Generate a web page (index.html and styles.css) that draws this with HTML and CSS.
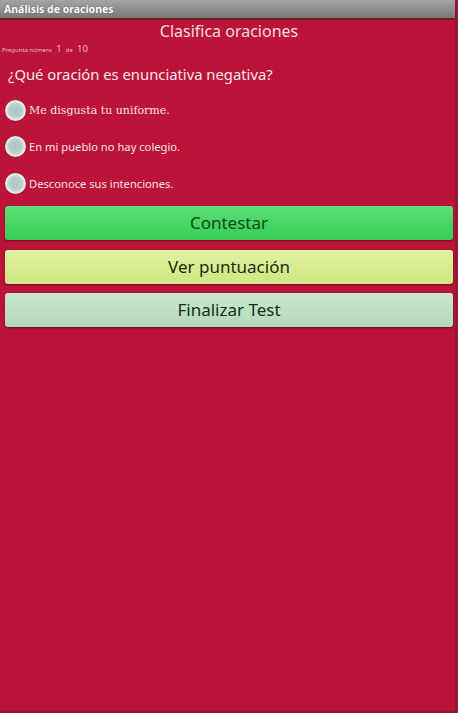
FILE: index.html
```html
<!DOCTYPE html>
<html lang="es">
<head>
<meta charset="utf-8">
<title>Análisis de oraciones</title>
<link rel="stylesheet" href="styles.css">
</head>
<body>
<div class="screen">
  <div class="titlebar">Análisis de oraciones</div>
  <div class="content">
    <h1 class="heading">Clasifica oraciones</h1>
    <div class="counter"><span class="lbl">Pregunta número</span> <span class="num">1</span> <span class="lbl">de</span> <span class="num">10</span></div>
    <div class="question">¿Qué oración es enunciativa negativa?</div>
    <div class="options">
      <label class="option"><span class="radio"></span><span class="opt-text serif">Me disgusta tu uniforme.</span></label>
      <label class="option"><span class="radio"></span><span class="opt-text">En mi pueblo no hay colegio.</span></label>
      <label class="option"><span class="radio"></span><span class="opt-text">Desconoce sus intenciones.</span></label>
    </div>
    <div class="buttons">
      <div class="btn btn-green">Contestar</div>
      <div class="btn btn-yellow">Ver puntuación</div>
      <div class="btn btn-pale">Finalizar Test</div>
    </div>
  </div>
</div>
</body>
</html>
```
FILE: styles.css
```css
html, body {
  margin: 0;
  padding: 0;
}
body {
  width: 458px;
  height: 713px;
  overflow: hidden;
  font-family: "Noto Sans", "Open Sans", sans-serif;
}
.screen {
  width: 458px;
  height: 713px;
  background: #bc1439;
  box-sizing: border-box;
  border-right: 3px solid #8e1a36;
  border-bottom: 2px solid #8e1a36;
  display: flex;
  flex-direction: column;
}
.titlebar {
  height: 18px;
  line-height: 18px;
  padding-left: 4px;
  font-size: 10.5px;
  font-weight: bold;
  color: #ffffff;
  background: linear-gradient(#a4a4a4, #8a8a8a 60%, #7a7a7a);
  border-bottom: 2px solid #6b1a2c;
  text-shadow: 0 0 1px #444;
}
.content {
  display: flex;
  flex-direction: column;
  padding: 0 2px 0 5px;
}
.heading {
  margin: 0;
  font-size: 16px;
  font-weight: normal;
  color: #f2dde1;
  text-align: center;
  line-height: 22px;
}
.counter {
  margin-left: -3px;
  margin-top: -2px;
  line-height: 12px;
  color: #e8b8c2;
}
.counter .lbl {
  font-size: 6px;
}
.counter .num {
  font-size: 9.5px;
}
.question {
  margin-top: 8px;
  margin-left: 3px;
  font-size: 14.8px;
  color: #f6e6ea;
  line-height: 20px;
}
.options {
  display: flex;
  flex-direction: column;
  gap: 14.5px;
  margin-top: 15px;
}
.option {
  display: flex;
  align-items: center;
  height: 22px;
  gap: 3px;
}
.radio {
  width: 21px;
  height: 21px;
  border-radius: 50%;
  box-sizing: border-box;
  background: radial-gradient(circle at 50% 50%, #a9c4c0 0, #b8cfcb 45%, #e4ecea 62%, #cfd8d6 80%, #9aa8a6 100%);
  box-shadow: 0 0 1px #6a1224;
}
.opt-text {
  font-size: 11.2px;
  color: #f4e2e6;
}
.opt-text.serif {
  font-family: "DejaVu Serif", "Liberation Serif", serif;
  font-size: 11px;
}
.buttons {
  display: flex;
  flex-direction: column;
  gap: 9.5px;
  margin-top: 12px;
}
.btn {
  height: 34px;
  line-height: 34px;
  border-radius: 3px;
  text-align: center;
  font-size: 17px;
  box-shadow: 0 1px 2px rgba(60, 0, 10, 0.6);
}
.btn-green {
  background: linear-gradient(#5ee07a, #44d561 55%, #3ccc58);
  color: #0d4a14;
}
.btn-yellow {
  background: linear-gradient(#e2f2a6, #d6ec8e 55%, #cde582);
  color: #1d2a10;
}
.btn-pale {
  background: linear-gradient(#cae8cc, #bde0c2 55%, #b2d8b8);
  color: #1a2a1e;
}
```
